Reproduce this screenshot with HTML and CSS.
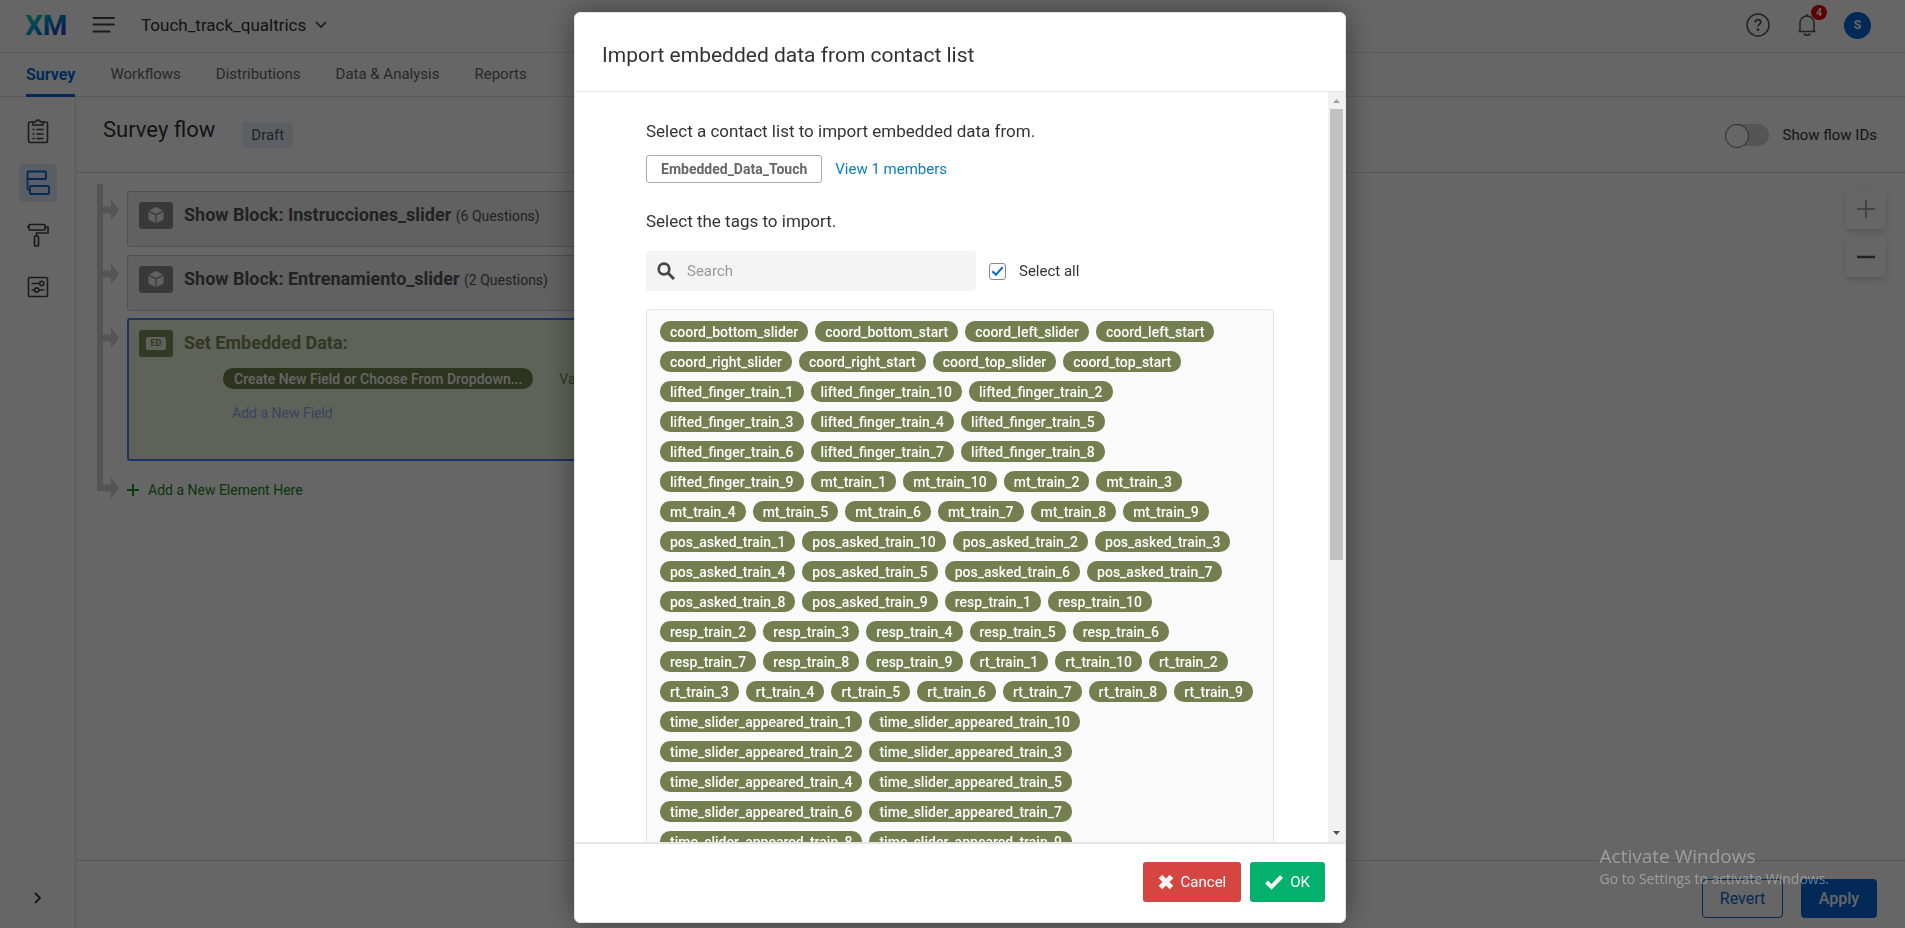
FILE: index.html
```html
<!DOCTYPE html>
<html lang="en">
<head>
<meta charset="utf-8">
<title>Survey flow</title>
<link rel="stylesheet" href="styles.css">
</head>
<body>
<div class="app">
  <header class="topbar">
    <svg class="logo" width="46" height="34" viewBox="0 0 46 34" role="img" aria-label="XM">
      <defs><linearGradient id="xm" x1="0" y1="0" x2="1" y2="1"><stop offset="0.05" stop-color="#21db9a"/><stop offset="0.4" stop-color="#00a0d8"/><stop offset="0.65" stop-color="#0768c8"/><stop offset="1" stop-color="#6a10d0"/></linearGradient></defs>
      <text class="logo-text" x="0" y="27" fill="url(#xm)">XM</text>
    </svg>
    <button class="icon-btn menu" aria-label="Menu"><svg width="24" height="20" viewBox="0 0 24 20"><path d="M1.500 3H22M1.500 9.500H22M1.500 16.500H17.500" fill="none" stroke="#444" stroke-width="2" stroke-linecap="round"/></svg></button>
    <button class="project">Touch_track_qualtrics <svg width="14" height="10" viewBox="0 0 14 10"><path d="M2 2l5 5 5-5" fill="none" stroke="#444" stroke-width="1.600"/></svg></button>
    <div class="account">
      <button class="icon-btn" aria-label="Help"><svg width="24" height="24" viewBox="0 0 24 24" fill="none" stroke="#555" stroke-width="1.500"><circle cx="12" cy="12" r="11"/><path d="M9.200 9.500c0-1.800 1.200-2.900 2.800-2.900s2.800 1 2.800 2.600c0 2-2.800 2-2.800 4.300" stroke-width="1.700"/><circle cx="12" cy="16.700" r=".6" fill="#555"/></svg></button>
      <button class="icon-btn bell" aria-label="Notifications"><svg width="20" height="24" viewBox="0 0 20 24" fill="none" stroke="#555" stroke-width="1.500"><path d="M1.500 18.500h17M3 18.500V10a7 7 0 0 1 14 0v8.500M10 3V1M7 20.500c.5 2.200 5.500 2.200 6 0"/></svg><span class="badge">4</span></button>
      <button class="avatar">S</button>
    </div>
  </header>
  <nav class="tabs">
    <a class="tab tab-active" href="#">Survey</a>
    <a class="tab" href="#">Workflows</a>
    <a class="tab" href="#">Distributions</a>
    <a class="tab" href="#">Data &amp; Analysis</a>
    <a class="tab" href="#">Reports</a>
  </nav>
  <div class="workspace">
    <aside class="rail">
      <button class="rail-btn" aria-label="Builder"><svg width="22" height="26" viewBox="0 0 22 26" fill="none" stroke="#444" stroke-width="1.600"><path d="M6 4H3Q1.500 4 1.500 5.500V23Q1.500 24.500 3 24.500H19Q20.500 24.500 20.500 23V5.500Q20.500 4 19 4H16"/><path d="M6 7V4h2.500a2.600 2.600 0 0 1 5 0H16v3z"/><path d="M5.500 11.500h2M9.500 11.500h7M5.500 16h2M9.500 16h7M5.500 20.500h2M9.500 20.500h7"/></svg></button>
      <button class="rail-btn rail-active" aria-label="Survey flow"><svg width="24" height="26" viewBox="0 0 24 26" fill="none" stroke="#0768dd" stroke-width="1.800"><rect x="1.500" y="1.500" width="18.500" height="7.500" rx="1"/><rect x="4" y="16" width="19" height="8" rx="1"/><path d="M1.500 8v9.500Q1.500 20 4 20"/></svg></button>
      <button class="rail-btn" aria-label="Look and feel"><svg width="24" height="24" viewBox="0 0 24 24" fill="none" stroke="#444" stroke-width="1.700"><rect x="3" y="1.500" width="16" height="5.500" rx="1"/><path d="M1 4h2M19 4h3v6H10.500v3"/><rect x="8.500" y="13" width="4" height="10" rx="1"/></svg></button>
      <button class="rail-btn" aria-label="Survey options"><svg width="22" height="22" viewBox="0 0 22 22" fill="none" stroke="#444" stroke-width="1.600"><rect x="1.500" y="1.500" width="19" height="19" rx="1"/><path d="M4.500 7.500h8M4.500 14h3M12 14h5.500"/><circle cx="14.700" cy="7.500" r="2.100"/><circle cx="9.700" cy="14" r="2.100"/></svg></button>
      <button class="icon-btn expand" aria-label="Expand"><svg width="10" height="14" viewBox="0 0 10 14"><path d="M2 2l5 5-5 5" fill="none" stroke="#333" stroke-width="1.800"/></svg></button>
    </aside>
    <main class="main">
      <div class="titlebar">
        <h1 class="title">Survey flow</h1>
        <span class="draft">Draft</span>
        <label class="flow-ids"><input class="switch" type="checkbox">Show flow IDs</label>
      </div>
      <div class="canvas">
        <div class="step">
          <span class="spine"><svg class="arrow" width="16" height="22" viewBox="0 0 16 22"><path d="M0 7.500h8V0l8 11-8 11v-7.500H0z"/></svg></span>
          <section class="block">
            <span class="block-icon"><svg width="16" height="17" viewBox="0 0 16 17" fill="#f2f2f2"><path d="M8 0l7 3.500L8 7 1 3.500zM.5 5L7.400 8.300V16L.5 12.500zM15.500 5L8.600 8.300V16l6.900-3.500z"/></svg></span>
            <h2 class="block-title">Show Block: Instrucciones_slider <small class="count">(6 Questions)</small></h2>
          </section>
        </div>
        <div class="step">
          <span class="spine"><svg class="arrow" width="16" height="22" viewBox="0 0 16 22"><path d="M0 7.500h8V0l8 11-8 11v-7.500H0z"/></svg></span>
          <section class="block">
            <span class="block-icon"><svg width="16" height="17" viewBox="0 0 16 17" fill="#f2f2f2"><path d="M8 0l7 3.500L8 7 1 3.500zM.5 5L7.400 8.300V16L.5 12.500zM15.500 5L8.600 8.300V16l6.900-3.500z"/></svg></span>
            <h2 class="block-title">Show Block: Entrenamiento_slider <small class="count">(2 Questions)</small></h2>
          </section>
        </div>
        <div class="step">
          <span class="spine"><svg class="arrow" width="16" height="22" viewBox="0 0 16 22"><path d="M0 7.500h8V0l8 11-8 11v-7.500H0z"/></svg></span>
          <section class="block block-data">
            <span class="block-icon block-icon-data"><span class="ed">ED</span></span>
            <div class="data-body">
              <h2 class="block-title">Set Embedded Data:</h2>
              <div class="field-row"><button class="field-chip">Create New Field or Choose From Dropdown...</button><span class="value">Value</span></div>
              <a class="add-field" href="#">Add a New Field</a>
            </div>
          </section>
        </div>
        <div class="step">
          <span class="spine spine-end"><svg class="arrow" width="16" height="22" viewBox="0 0 16 22"><path d="M0 7.500h8V0l8 11-8 11v-7.500H0z"/></svg></span>
          <a class="add-element" href="#"><svg width="12" height="12" viewBox="0 0 12 12"><path d="M6 0v12M0 6h12" stroke="#1a961a" stroke-width="2"/></svg>Add a New Element Here</a>
        </div>
        <div class="zoom">
          <button class="zoom-btn" aria-label="Zoom in"><svg width="18" height="18" viewBox="0 0 18 18"><path d="M9 0v18M0 9h18" stroke="#aaa" stroke-width="2"/></svg></button>
          <button class="zoom-btn" aria-label="Zoom out"><svg width="18" height="18" viewBox="0 0 18 18"><path d="M0 9h18" stroke="#555" stroke-width="2.500"/></svg></button>
        </div>
      </div>
      <footer class="actions"><button class="btn-revert">Revert</button><button class="btn-apply">Apply</button></footer>
    </main>
  </div>
</div>

<div class="overlay">
  <div class="modal" role="dialog" aria-labelledby="dialog-title">
    <header class="modal-head"><h2 class="modal-title" id="dialog-title">Import embedded data from contact list</h2></header>
    <div class="modal-mid">
      <div class="modal-body">
        <p class="prompt">Select a contact list to import embedded data from.</p>
        <div class="list-row"><button class="list-btn">Embedded_Data_Touch</button><a class="members" href="#">View 1 members</a></div>
        <p class="prompt prompt-tags">Select the tags to import.</p>
        <div class="search-row">
          <label class="search"><svg width="18" height="18" viewBox="0 0 18 18" fill="none" stroke="#484848"><circle cx="7" cy="7" r="5.300" stroke-width="2.700"/><path d="M11 11l6 6" stroke-width="3"/></svg><input class="search-input" type="text" placeholder="Search" aria-label="Search"></label>
          <label class="all"><input class="check" type="checkbox" checked>Select all</label>
        </div>
        <div class="tags">
          <div class="tag-row"><button class="tag">coord_bottom_slider</button><button class="tag">coord_bottom_start</button><button class="tag">coord_left_slider</button><button class="tag">coord_left_start</button></div>
          <div class="tag-row"><button class="tag">coord_right_slider</button><button class="tag">coord_right_start</button><button class="tag">coord_top_slider</button><button class="tag">coord_top_start</button></div>
          <div class="tag-row"><button class="tag">lifted_finger_train_1</button><button class="tag">lifted_finger_train_10</button><button class="tag">lifted_finger_train_2</button></div>
          <div class="tag-row"><button class="tag">lifted_finger_train_3</button><button class="tag">lifted_finger_train_4</button><button class="tag">lifted_finger_train_5</button></div>
          <div class="tag-row"><button class="tag">lifted_finger_train_6</button><button class="tag">lifted_finger_train_7</button><button class="tag">lifted_finger_train_8</button></div>
          <div class="tag-row"><button class="tag">lifted_finger_train_9</button><button class="tag">mt_train_1</button><button class="tag">mt_train_10</button><button class="tag">mt_train_2</button><button class="tag">mt_train_3</button></div>
          <div class="tag-row"><button class="tag">mt_train_4</button><button class="tag">mt_train_5</button><button class="tag">mt_train_6</button><button class="tag">mt_train_7</button><button class="tag">mt_train_8</button><button class="tag">mt_train_9</button></div>
          <div class="tag-row"><button class="tag">pos_asked_train_1</button><button class="tag">pos_asked_train_10</button><button class="tag">pos_asked_train_2</button><button class="tag">pos_asked_train_3</button></div>
          <div class="tag-row"><button class="tag">pos_asked_train_4</button><button class="tag">pos_asked_train_5</button><button class="tag">pos_asked_train_6</button><button class="tag">pos_asked_train_7</button></div>
          <div class="tag-row"><button class="tag">pos_asked_train_8</button><button class="tag">pos_asked_train_9</button><button class="tag">resp_train_1</button><button class="tag">resp_train_10</button></div>
          <div class="tag-row"><button class="tag">resp_train_2</button><button class="tag">resp_train_3</button><button class="tag">resp_train_4</button><button class="tag">resp_train_5</button><button class="tag">resp_train_6</button></div>
          <div class="tag-row"><button class="tag">resp_train_7</button><button class="tag">resp_train_8</button><button class="tag">resp_train_9</button><button class="tag">rt_train_1</button><button class="tag">rt_train_10</button><button class="tag">rt_train_2</button></div>
          <div class="tag-row"><button class="tag">rt_train_3</button><button class="tag">rt_train_4</button><button class="tag">rt_train_5</button><button class="tag">rt_train_6</button><button class="tag">rt_train_7</button><button class="tag">rt_train_8</button><button class="tag">rt_train_9</button></div>
          <div class="tag-row"><button class="tag">time_slider_appeared_train_1</button><button class="tag">time_slider_appeared_train_10</button></div>
          <div class="tag-row"><button class="tag">time_slider_appeared_train_2</button><button class="tag">time_slider_appeared_train_3</button></div>
          <div class="tag-row"><button class="tag">time_slider_appeared_train_4</button><button class="tag">time_slider_appeared_train_5</button></div>
          <div class="tag-row"><button class="tag">time_slider_appeared_train_6</button><button class="tag">time_slider_appeared_train_7</button></div>
          <div class="tag-row"><button class="tag">time_slider_appeared_train_8</button><button class="tag">time_slider_appeared_train_9</button></div>
        </div>
      </div>
      <div class="scrollbar" aria-hidden="true">
        <svg class="scroll-arrow" width="17" height="17" viewBox="0 0 17 17"><path d="M5 11h7L8.500 7z" fill="#a3a3a3"/></svg>
        <div class="track"><div class="thumb"></div></div>
        <svg class="scroll-arrow" width="17" height="17" viewBox="0 0 17 17"><path d="M5 6h7L8.500 10z" fill="#505050"/></svg>
      </div>
    </div>
    <footer class="modal-foot">
      <button class="btn btn-cancel"><svg width="16" height="16" viewBox="0 0 16 16"><path d="M2.500 2.500l11 11M13.500 2.500l-11 11" stroke="#f5f5f5" stroke-width="5"/></svg>Cancel</button>
      <button class="btn btn-ok"><svg width="18" height="16" viewBox="0 0 18 16"><path d="M1.500 8l5 5L16.500 2.500" fill="none" stroke="#f5f5f5" stroke-width="4"/></svg>OK</button>
    </footer>
  </div>
</div>
<div class="watermark"><div class="watermark-title">Activate Windows</div><div class="watermark-text">Go to Settings to activate Windows.</div></div>
</body>
</html>
```
FILE: styles.css
```css
* { box-sizing: border-box; }
html, body { height: 100%; }
body { margin: 0; font-family: Roboto, "Liberation Sans", sans-serif; font-size: 15px; color: #333; background: #fff; overflow: hidden; }
button, input { font: inherit; color: inherit; }
button { border: 0; padding: 0; background: none; white-space: nowrap; }
h1, h2, p { margin: 0; font-weight: 400; }
a { text-decoration: none; white-space: nowrap; }
svg { display: block; flex: none; }

.app { height: 100vh; display: flex; flex-direction: column; }
.topbar { display: flex; align-items: center; height: 53px; padding: 0 34px 2px 25px; border-bottom: 1px solid #e2e2e2; }
.logo-text { font-size: 28px; font-weight: 700; }
.menu { margin-left: 21px; }
.project { display: flex; align-items: center; gap: 8px; margin-left: 25px; font-size: 17px; }
.account { display: flex; align-items: center; gap: 27px; margin-left: auto; }
.bell { position: relative; }
.badge { position: absolute; left: 14px; top: -8px; width: 16px; height: 15px; border-radius: 8px; background: #e00000; color: #fff; font-size: 10px; font-weight: 700; line-height: 15px; }
.avatar { width: 27px; height: 27px; border-radius: 50%; background: #0768dd; color: #fff; font-size: 12px; font-weight: 700; }
.tabs { display: flex; gap: 35px; height: 44px; padding-left: 26px; border-bottom: 1px solid #e2e2e2; }
.tab { color: #666; line-height: 43px; height: 44px; }
.tab-active { color: #0768dd; font-size: 16px; font-weight: 700; border-bottom: 3px solid #0768dd; }
.workspace { flex: 1; display: flex; min-height: 0; }
.rail { width: 76px; flex: none; display: flex; flex-direction: column; align-items: center; gap: 14px; padding: 15px 0 23px; border-right: 1px solid #e2e2e2; }
.rail-btn { width: 38px; height: 38px; display: grid; place-items: center; border-radius: 5px; }
.rail-active { background: #dcecfa; }
.expand { margin-top: auto; }
.main { flex: 1; min-width: 0; display: flex; flex-direction: column; }
.titlebar { display: flex; align-items: center; height: 76px; padding: 0 28px 0 27px; border-bottom: 1px solid #ddd; }
.title { font-size: 22px; padding-bottom: 10px; }
.draft { margin-left: 27px; padding: 0 9px; border-radius: 4px; background: #e5f0fa; line-height: 26px; color: #555; }
.flow-ids { display: flex; align-items: center; gap: 14px; margin-left: auto; }
.switch { appearance: none; width: 44px; height: 22px; margin: 0; border-radius: 11px; background: #d4d4d4; }
.switch::before { content: ""; display: block; width: 22px; height: 22px; border: 1px solid #777; border-radius: 50%; background: #fff; }
.canvas { position: relative; flex: 1; padding: 11px 600px 0 21px; }
.step { display: flex; }
.spine { width: 30px; flex: none; border-left: 6px solid #d2d2d2; padding-top: 15px; }
.arrow { fill: #d2d2d2; }
.spine-end { height: 29px; }
.block { flex: 1; display: flex; gap: 11px; height: 56px; margin: 7px 0 1px; padding: 10px 11px; background: #f2f2f2; border: 1px solid #c8c8c8; border-radius: 3px; }
.block-icon { width: 34px; height: 27px; flex: none; display: grid; place-items: center; background: #909090; border-radius: 3px; }
.block-title { font-size: 18px; font-weight: 700; line-height: 25px; color: #555; white-space: nowrap; }
.count { font-size: 14px; font-weight: 400; }
.block-data { height: 143px; margin-top: 6px; padding-left: 10px; border: 2px solid #467dfa; background: #ebf5dc; color: #7a8a55; }
.block-data .block-title { color: #7a8a55; }
.block-icon-data { background: #7d9158; }
.ed { width: 20px; border-radius: 2px; background: #eef2e6; color: #7a8a55; font-size: 9px; font-weight: 700; line-height: 13px; text-align: center; }
.field-row { display: flex; align-items: center; gap: 26px; margin: 13px 0 15px 39px; }
.field-chip { height: 21px; padding: 0 11px; border-radius: 10px; background: #737f4d; color: #fff; font-size: 14px; font-weight: 500; }
.value { font-size: 14px; }
.add-field { margin-left: 48px; font-size: 14px; color: #93a9f2; }
.add-element { display: flex; align-items: center; align-self: flex-start; gap: 9px; padding-top: 19px; color: #1a861a; font-size: 14px; line-height: 18px; }
.zoom { position: absolute; top: 16px; right: 19px; display: grid; gap: 8px; }
.zoom-btn { width: 40px; height: 40px; display: grid; place-items: center; border-radius: 4px; background: #fff; box-shadow: 0 3px 7px rgba(0,0,0,.15); }
.actions { display: flex; justify-content: flex-end; gap: 18px; height: 68px; padding: 18px 28px 10px; border-top: 1px solid #ddd; }
.btn-revert { width: 81px; height: 39px; border: 1px solid #0768dd; border-radius: 4px; color: #0768dd; }
.btn-apply { width: 76px; height: 39px; border-radius: 4px; background: #0768dd; color: #fff; font-weight: 500; }
.actions button { font-size: 16px; }

.overlay { position: fixed; inset: 0; display: flex; justify-content: center; padding: 12px 0 5px 15px; background: rgba(0,0,0,.6); }
.modal { width: 772px; display: flex; flex-direction: column; background: #fff; border: 1px solid #e5e5e5; border-radius: 6px; box-shadow: 0 0 30px rgba(0,0,0,.4); }
.modal-head { padding: 27px 27px 21px; border-bottom: 1px solid #e5e5e5; }
.modal-title { font-size: 21px; line-height: 30px; }
.modal-mid { flex: 1; display: flex; min-height: 0; }
.modal-body { flex: 1; padding: 27px 54px 0 71px; overflow: hidden; }
.prompt { font-size: 17px; line-height: 24px; }
.list-row { display: flex; align-items: center; gap: 13px; margin: 12px 0 26px; }
.list-btn { height: 28px; padding: 0 14px; border: 1px solid #aaa; border-radius: 3px; color: #666; font-size: 14px; font-weight: 700; }
.members { color: #0b7cc4; }
.search-row { display: flex; align-items: center; gap: 13px; margin: 18px 0; }
.search { display: flex; align-items: center; gap: 12px; width: 330px; height: 40px; padding: 0 11px; border-radius: 4px; background: #f4f4f4; }
.search-input { flex: 1; min-width: 0; border: 0; padding: 0; background: none; outline: 0; }
.search-input::placeholder { color: #999; opacity: 1; }
.all { display: flex; align-items: center; gap: 13px; }
.check { appearance: none; width: 17px; height: 17px; margin: 0; border: 1px solid #888; border-radius: 3px; display: grid; place-items: center; }
.check::before { content: ""; width: 9px; height: 4px; border: solid #0768dd; border-width: 0 0 2px 2px; transform: translateY(-1px) rotate(-48deg); }
.tags { display: flex; flex-direction: column; gap: 9px; padding: 11px 13px 40px; border: 1px solid #e5e5e5; border-radius: 4px; background: #fafafa; }
.tag-row { display: flex; gap: 7px; }
.tag { height: 21px; padding: 0 10px; border-radius: 10px; background: #737f4f; color: #fff; font-size: 14px; font-weight: 500; line-height: 20px; }
.scrollbar { width: 17px; display: flex; flex-direction: column; background: #f1f1f1; }
.track { flex: 1; padding: 0 2px; }
.thumb { height: 63%; background: #c1c1c1; }
.modal-foot { display: flex; justify-content: flex-end; gap: 9px; padding: 18px 20px 20px; border-top: 2px solid #e5e5e5; }
.btn { display: flex; align-items: center; gap: 7px; height: 40px; padding: 0 15px; border-radius: 3px; color: #fff; }
.btn-cancel { background: #d64541; }
.btn-ok { background: #04b06d; }
.watermark { position: fixed; right: 76px; bottom: 39px; color: rgba(255,255,255,.36); font-family: "Open Sans", "Noto Sans", sans-serif; pointer-events: none; }
.watermark-title { font-size: 19px; line-height: 26px; }
.watermark-text { font-size: 14px; line-height: 20px; }
```
